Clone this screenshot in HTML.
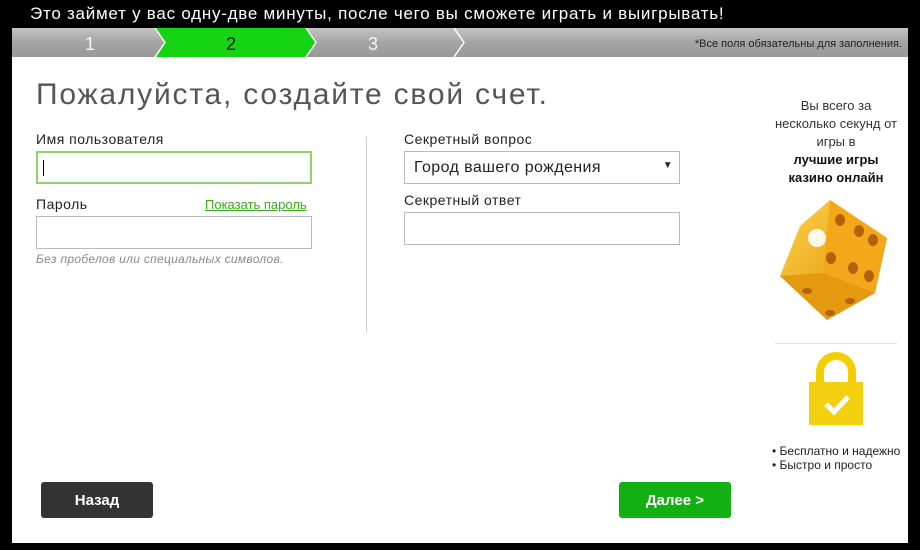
<!DOCTYPE html>
<html><head><meta charset="utf-8"><style>
*{margin:0;padding:0;box-sizing:border-box}
body{width:920px;height:550px;background:#000;font-family:"Liberation Sans",sans-serif;position:relative;overflow:hidden}
.top{position:absolute;left:30px;top:4px;color:#fff;font-size:17px;letter-spacing:0.75px}
.bar{position:absolute;left:12px;top:28px;width:896px;height:29px;background:linear-gradient(#c4c4c4,#a4a4a4 50%,#999)}
.panel{position:absolute;left:12px;top:57px;width:896px;height:486px;background:#fff}
.abs{position:absolute}
h1{position:absolute;left:36px;top:78px;font-weight:normal;font-size:30px;color:#555;letter-spacing:1.8px}
.lbl{position:absolute;font-size:14px;color:#222;letter-spacing:0.5px}
.inp{position:absolute;height:33px;border:1px solid #bbb;background:#fff}
.btn{position:absolute;height:36px;border-radius:3px;color:#fff;font-weight:bold;font-size:15px;text-align:center;line-height:38px}
</style></head><body>
<div class="top">Это займет у вас одну-две минуты, после чего вы сможете играть и выигрывать!</div>
<div class="bar"></div>
<svg class="abs" style="left:12px;top:28px" width="896" height="29">
<polygon points="143,0 294,0 304,14.5 294,29 143,29 153,14.5" fill="#14d414"/>
<polyline points="143,0 153,14.5 143,29" fill="none" stroke="#fff" stroke-width="1.5"/>
<polyline points="294,0 304,14.5 294,29" fill="none" stroke="#fff" stroke-width="1.5"/>
<polyline points="442,0 452,14.5 442,29" fill="none" stroke="#fff" stroke-width="1.5"/>
<text x="73" y="22" fill="#f4f4f4" font-size="18" font-family="Liberation Sans">1</text>
<text x="214" y="22" fill="#111" font-size="18" font-family="Liberation Sans">2</text>
<text x="356" y="22" fill="#f4f4f4" font-size="18" font-family="Liberation Sans">3</text>
<text x="890" y="19" fill="#222" font-size="11" text-anchor="end" font-family="Liberation Sans">*Все поля обязательны для заполнения.</text>
</svg>
<div class="panel"></div>
<h1>Пожалуйста, создайте свой счет.</h1>
<div class="lbl" style="left:36px;top:131px">Имя пользователя</div>
<div class="inp" style="left:36px;top:151px;width:276px;border:2px solid #8fd36a"><div class="abs" style="left:5px;top:7px;width:1px;height:16px;background:#000"></div></div>
<div class="lbl" style="left:36px;top:196px">Пароль</div>
<div class="lbl" style="left:205px;top:197px;font-size:13px;color:#3aaa1a;text-decoration:underline;letter-spacing:0">Показать пароль</div>
<div class="inp" style="left:36px;top:216px;width:276px"></div>
<div class="lbl" style="left:36px;top:252px;font-size:12px;font-style:italic;color:#888;letter-spacing:0.3px">Без пробелов или специальных символов.</div>
<div class="abs" style="left:366px;top:137px;width:1px;height:195px;background:#ccc"></div>
<div class="lbl" style="left:404px;top:131px">Секретный вопрос</div>
<div class="inp" style="left:404px;top:151px;width:276px;font-size:16px;padding:7px 0 0 9px;color:#222;letter-spacing:0.4px">Город вашего рождения<span class="abs" style="right:6px;top:8px;font-size:10px">▼</span></div>
<div class="lbl" style="left:404px;top:192px">Секретный ответ</div>
<div class="inp" style="left:404px;top:212px;width:276px"></div>
<div class="abs" style="left:766px;top:97px;width:140px;text-align:center;font-size:13px;line-height:18px;color:#333">Вы всего за<br>несколько секунд от<br>игры в<br><b style="color:#111">лучшие игры<br>казино онлайн</b></div>
<svg class="abs" style="left:775px;top:198px" width="120" height="130">
<defs><linearGradient id="g" x1="0" y1="0" x2="1" y2="1"><stop offset="0" stop-color="#ffd34a"/><stop offset="1" stop-color="#d98a00"/></linearGradient></defs>
<polygon points="25,28 55,2 112,40 100,95 52,122 5,78" fill="url(#g)"/>
<polygon points="55,2 112,40 100,95 48,75" fill="#f2a818"/>
<polygon points="48,75 100,95 52,122 5,78" fill="#e39a10"/>
<circle cx="42" cy="40" r="9" fill="#fff" opacity=".9"/>
<g fill="#b5600a"><ellipse cx="65" cy="22" rx="5" ry="6"/><ellipse cx="84" cy="33" rx="5" ry="6"/><ellipse cx="98" cy="42" rx="5" ry="6"/><ellipse cx="56" cy="60" rx="5" ry="6"/><ellipse cx="78" cy="70" rx="5" ry="6"/><ellipse cx="94" cy="78" rx="5" ry="6"/><ellipse cx="32" cy="93" rx="5" ry="3"/><ellipse cx="75" cy="103" rx="5" ry="3"/><ellipse cx="55" cy="115" rx="5" ry="3"/></g>
</svg>
<div class="abs" style="left:775px;top:343px;width:122px;height:1px;background:#ddd"></div>
<svg class="abs" style="left:808px;top:352px" width="56" height="75">
<path d="M12,30 V20 A16,16 0 0 1 44,20 V30" fill="none" stroke="#f4cf00" stroke-width="8"/>
<rect x="1" y="30" width="54" height="43" fill="#f4d010"/>
<polyline points="18,52 26,60 40,45" fill="none" stroke="#fff" stroke-width="5"/>
</svg>
<div class="abs" style="left:772px;top:444px;font-size:12px;line-height:14px;color:#222">• Бесплатно и надежно<br>• Быстро и просто</div>
<div class="btn" style="left:41px;top:482px;width:112px;background:#333">Назад</div>
<div class="btn" style="left:619px;top:482px;width:112px;background:#12b012">Далее &gt;</div>
</body></html>
